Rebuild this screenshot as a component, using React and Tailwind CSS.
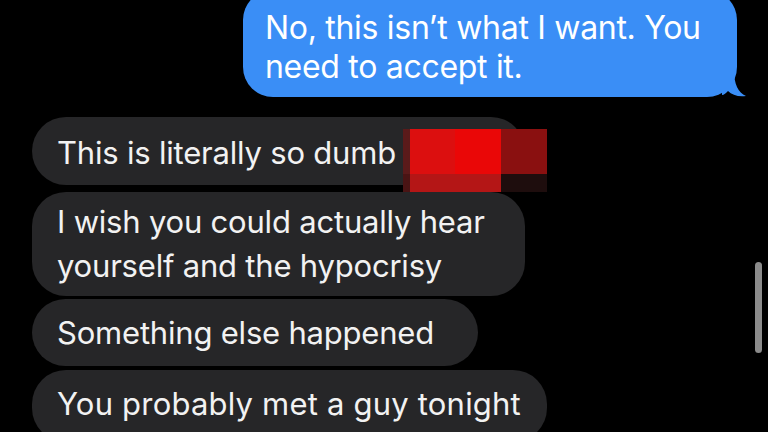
import React from 'react'

const font = { fontFamily: 'Inter, "Noto Sans", sans-serif' }

const GreyBubble = ({ width, children, className = '' }) => (
  <div
    className={`relative rounded-[34px] bg-[#262628] pl-[25px] text-[31px] leading-[44px] tracking-[-0.2px] text-[#f2f2f2] ${width} ${className}`}
  >
    {children}
  </div>
)

export default function App() {
  return (
    <div className="relative h-[432px] w-[768px] overflow-hidden bg-black" style={font}>
      {/* sent message */}
      <div className="flex justify-end pr-[31px]">
        <div className="relative -mt-[10px] w-[494px] rounded-[30px] bg-[#3a8ef6] pb-[11px] pl-[22px] pt-[18px] text-[32px] leading-[39px] tracking-[-0.3px] text-white">
          <p>No, this isn’t what I want. You</p>
          <p>need to accept it.</p>
          <svg
            className="absolute bottom-0 right-[-9px]"
            width="24"
            height="26"
            viewBox="0 0 24 26"
          >
            <path d="M0 0 L12 0 C12 12 16 22 24 25 C16 26 10 24 6 20 C4 22 2 24 0 24 Z" fill="#3a8ef6" />
          </svg>
        </div>
      </div>

      {/* received messages */}
      <div className="mt-[20px] flex flex-col pl-[32px]">
        <GreyBubble width="w-[493px]" className="h-[68px] pt-[14px]">
          This is literally so dumb
          <div className="absolute left-[371px] top-[12px] flex h-[63px] w-[144px]">
            <div className="flex w-[7px] flex-col">
              <div className="h-[45px] bg-[#5a1a1a]" />
              <div className="flex-1 bg-[#4a1414]" />
            </div>
            <div className="flex w-[91px] flex-col">
              <div className="flex h-[45px]">
                <div className="w-[45px] bg-[#dc0f0f]" />
                <div className="flex-1 bg-[#ea0707]" />
              </div>
              <div className="flex-1 bg-[#b41616]" />
            </div>
            <div className="flex flex-1 flex-col">
              <div className="h-[45px] bg-[#8a1010]" />
              <div className="flex-1 bg-[#1e0d0d]" />
            </div>
          </div>
        </GreyBubble>

        <GreyBubble width="w-[493px]" className="mt-[7px] h-[104px] pt-[8px]">
          <p>I wish you could actually hear</p>
          <p>yourself and the hypocrisy</p>
        </GreyBubble>

        <GreyBubble width="w-[446px]" className="mt-[3px] h-[67px] pt-[12px]">
          Something else happened
        </GreyBubble>

        <GreyBubble width="w-[515px]" className="mt-[4px] h-[72px] pt-[12px] tracking-[0.2px]">
          You probably met a guy tonight
        </GreyBubble>
      </div>

      {/* scroll indicator */}
      <div className="absolute left-[755px] top-[262px] h-[91px] w-[7px] rounded-full bg-[#8b8b8b]" />
    </div>
  )
}
